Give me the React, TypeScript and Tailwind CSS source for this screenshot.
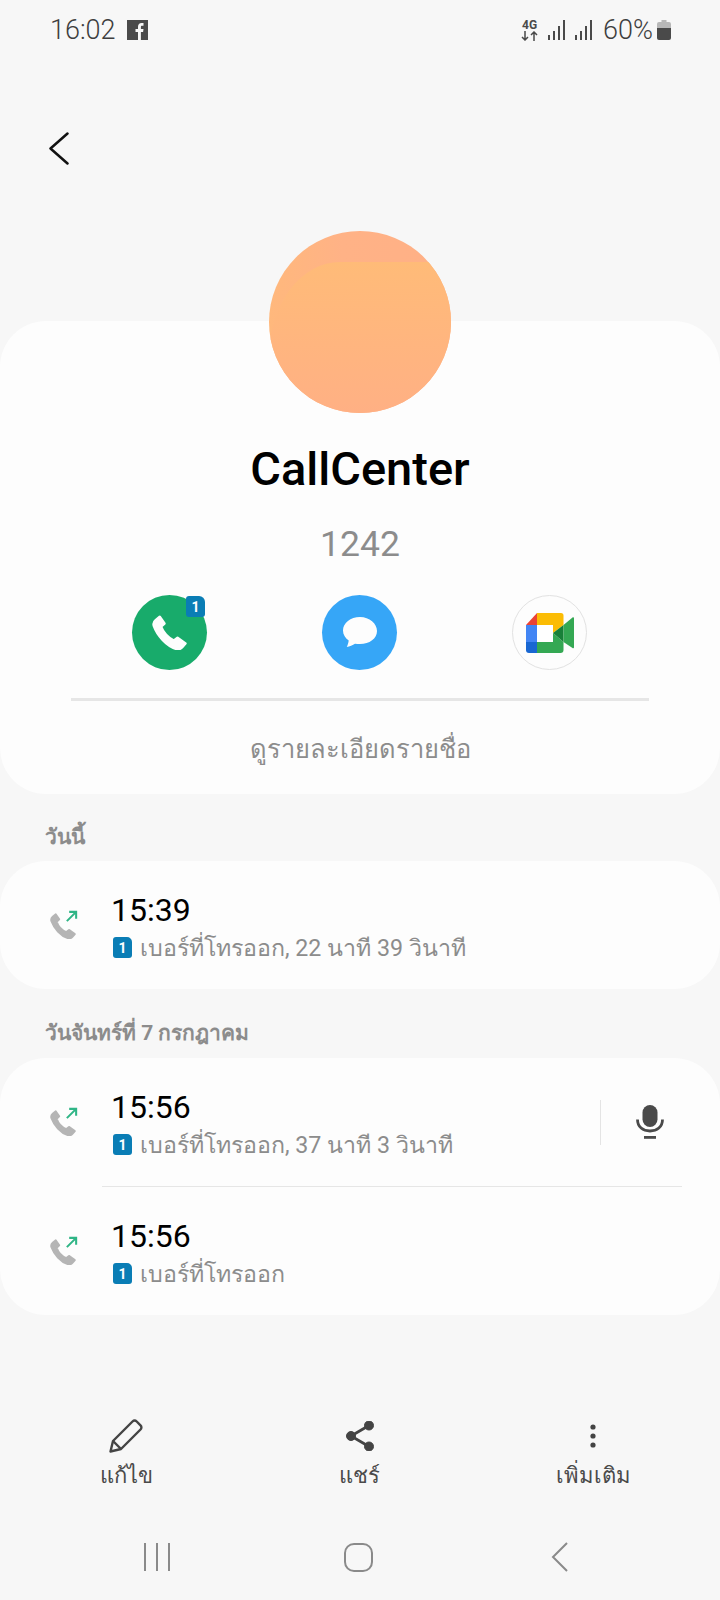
import React from "react";

const FONT = { roboto: "font-['Roboto','Noto_Sans',sans-serif]" };

function Handset({ className }: { className?: string }) {
  return (
    <svg viewBox="2.5 2.5 18.5 18.5" className={className} fill="currentColor" stroke="currentColor" strokeWidth="1.3" strokeLinejoin="round">
      <path d="M6.600 3.400 4.400 5.200C3.400 6 3.100 7.200 3.500 8.400c1.800 5 6.600 10.400 11.600 12 1.400.4 2.700 0 3.500-1l1.600-1.900-4.200-3-1.900 1.500c-2.900-1.200-5.800-4.400-6.800-7.300l1.800-1.700z" />
    </svg>
  );
}

function OutgoingIcon() {
  return (
    <div className="relative w-[29px] h-[29px] shrink-0">
      <Handset className="absolute left-[1px] top-[2px] w-[26px] h-[26px] text-[#b5b5b5]" />
      <svg viewBox="0 0 14 14" className="absolute left-[16px] top-[-1px] w-[13px] h-[13px]" fill="none" stroke="#2fb586" strokeWidth="2.200">
        <path d="M2 12 12 2M4.500 2H12v7.500" />
      </svg>
    </div>
  );
}

function SimBadge() {
  return (
    <span className="ml-[1px] flex items-center justify-center w-[19px] h-[21px] rounded-[3px] rounded-tr-[5px] bg-[#0a7db5] text-white text-[14px] font-bold leading-none shrink-0">
      1
    </span>
  );
}

function CallRow({ time, detail, mic }: { time: string; detail: string; mic?: boolean }) {
  return (
    <div className="flex items-center h-[128px] pl-[49px] pr-[56px]">
      <OutgoingIcon />
      <div className="ml-[34px] flex-1 pt-[4px]">
        <div className="-ml-[1px] text-[32px] leading-[36px] text-black">{time}</div>
        <div className="flex items-center gap-[8px] mt-[5px]">
          <SimBadge />
          <span className="text-[23.2px] leading-[30px] text-[#8c8c8c]">{detail}</span>
        </div>
      </div>
      {mic && (
        <>
          <div className="w-px h-[45px] bg-[#e4e4e4] mr-[35px]" />
          <svg viewBox="0 0 28 34" className="w-[28px] h-[34px] text-[#4a4a4a]" fill="currentColor">
            <rect x="6.500" y="0" width="15" height="22" rx="7.500" />
            <path d="M1.500 14.500c0 7.500 5.500 11.500 12.500 11.500s12.500-4 12.500-11.500" fill="none" stroke="currentColor" strokeWidth="2.800" />
            <rect x="8" y="31" width="12" height="2.800" />
          </svg>
        </>
      )}
    </div>
  );
}

function SignalBars() {
  return (
    <svg viewBox="0 0 18 20" className="w-[18px] h-[20px]" fill="#4a4a4a">
      <rect x="0" y="15" width="2" height="5" />
      <rect x="5" y="11" width="2" height="9" />
      <rect x="10" y="6" width="2" height="14" />
      <rect x="15" y="0" width="2" height="20" />
    </svg>
  );
}

function ActionButton({ label, children }: { label: string; children: React.ReactNode }) {
  return (
    <div className="flex flex-col items-center w-[120px]">
      <div className="flex items-center justify-center h-[36px]">{children}</div>
      <span className="mt-[6px] text-[22px] leading-[32px] font-light text-[#4a4a4a]">{label}</span>
    </div>
  );
}

export default function App() {
  return (
    <div className={`h-[1600px] w-[720px] overflow-hidden bg-[#f7f7f7] flex flex-col ${FONT.roboto}`}>
      {/* Status bar */}
      <div className="h-[60px] flex items-center justify-between pl-[50px] pr-[49px] shrink-0">
        <div className="flex items-center gap-[11px]">
          <span className="text-[27px] font-light text-[#3e3e3e]">16:02</span>
          <svg viewBox="0 0 21 20" className="w-[21px] h-[20px]">
            <rect width="21" height="20" fill="#4a4a4a" />
            <path d="M11 20v-8H8.500V9H11V6.800C11 4.400 12.400 3 14.600 3c.9 0 1.500.1 1.900.1v2.700h-1.300c-1 0-1.300.5-1.300 1.300V9h2.600l-.4 3h-2.200v8z" fill="#f7f7f7" />
          </svg>
        </div>
        <div className="flex items-center">
          <div className="flex flex-col items-center w-[17px] text-[#4a4a4a] mr-[10px]">
            <span className="text-[12px] leading-[11px] font-bold">4G</span>
            <svg viewBox="0 0 17 10" className="w-[17px] h-[10px]" fill="none" stroke="currentColor" strokeWidth="1.500">
              <path d="M4 0v9M1 6l3 3 3-3M13 10V1M10 4l3-3 3 3" />
            </svg>
          </div>
          <SignalBars />
          <div className="w-[9px]" />
          <SignalBars />
          <span className="ml-[10px] text-[27px] font-light text-[#3e3e3e]">60%</span>
          <svg viewBox="0 0 14 20" className="ml-[4px] w-[14px] h-[20px]">
            <path d="M4.500 0h5v2H12a2 2 0 0 1 2 2v4H0V4a2 2 0 0 1 2-2h2.500z" fill="#b8b8b8" />
            <path d="M0 8h14v10a2 2 0 0 1-2 2H2a2 2 0 0 1-2-2z" fill="#4a4a4a" />
          </svg>
        </div>
      </div>

      {/* Back */}
      <div className="h-[171px] shrink-0 pl-[49px] pt-[72px]">
        <svg viewBox="0 0 20 33" className="w-[20px] h-[33px]" fill="none" stroke="#111" strokeWidth="2.500" strokeLinecap="round" strokeLinejoin="round">
          <path d="M18.500 1.500 1.500 16.500l17 15" />
        </svg>
      </div>

      {/* Avatar */}
      <div className="relative z-10 mx-auto w-[182px] h-[182px] rounded-full overflow-hidden bg-gradient-to-r from-[#ffb87c] via-[#ffb286] via-40% to-[#ffb086] shrink-0 -mb-[92px]">
        <div className="absolute left-0 top-[31px] right-0 bottom-0 rounded-tl-[71px_95px] bg-gradient-to-b from-[#ffbb78] to-[#ffb084]" />
      </div>

      {/* Contact card */}
      <div className="h-[473px] shrink-0 rounded-[46px] bg-[#fdfdfd] pt-[116px] flex flex-col items-center">
        <div className="text-[47px] leading-[64px] font-medium text-black">CallCenter</div>
        <div className="mt-[18px] text-[35.5px] leading-[50px] text-[#8c8c8c]">1242</div>
        <div className="mt-[26px] flex w-full pl-[132px] gap-[115px]">
          <div className="relative w-[75px] h-[75px] rounded-full bg-[#18ab6b] flex items-center justify-center">
            <Handset className="w-[35px] h-[35px] text-[#fdfdfd]" />
            <span className="absolute right-[2px] top-[1px] flex items-center justify-center w-[19px] h-[21px] rounded-[3px] rounded-tr-[6px] bg-[#0a7db5] text-white text-[14px] font-bold leading-none">
              1
            </span>
          </div>
          <div className="w-[75px] h-[75px] rounded-full bg-[#36a6f7] flex items-center justify-center">
            <svg viewBox="0 0 36 34" className="w-[36px] h-[34px]" fill="#fdfdfd">
              <path d="M18 1C8.500 1 1 7 1 14.500c0 4 2.200 7.600 5.700 10-.2 2.400-1.200 5-1.900 6.400 2.700-.3 6-1.900 8.200-3.200 1.600.3 3.300.4 5 .4 9.500 0 17-5.700 17-13.100S27.500 1 18 1z" />
            </svg>
          </div>
          <div className="w-[75px] h-[75px] rounded-full border border-[#e2e2e2] flex items-center justify-center">
            <svg viewBox="0 0 48 40" className="w-[48px] h-[40px]">
              <path d="M11 0 0 12h11z" fill="#ea4335" />
              <path d="M11 0h24a2.500 2.500 0 0 1 2.500 2.500V12L27 20V12H11z" fill="#fbbc04" />
              <path d="M0 12h11v17H0z" fill="#4285f4" />
              <path d="M0 29h11v11H3a3 3 0 0 1-3-3z" fill="#1967d2" />
              <path d="M11 29h16v-9l10.500 9v8a3 3 0 0 1-3 3H11z" fill="#34a853" />
              <path d="M27 20 37.500 12v17z" fill="#188038" />
              <path d="M37.500 12 46.500 4.500c.7-.5 1.500 0 1.500.8v29c0 .8-.8 1.300-1.500.8L37.500 29z" fill="#34a853" />
              <path d="M11 12h16v17H11z" fill="#fff" />
            </svg>
          </div>
        </div>
        <div className="mt-[28px] w-[578px] h-[3px] bg-[#e6e6e6]" />
        <div className="mt-[16px] text-[25.5px] leading-[64px] text-[#8c8c8c]">ดูรายละเอียดรายชื่อ</div>
      </div>

      {/* Call log */}
      <div className="h-[67px] shrink-0 pl-[45px] pt-[24px] text-[21px] leading-[38px] font-bold text-[#8c8c8c]">วันนี้</div>
      <div className="shrink-0 rounded-[46px] bg-[#fdfdfd]">
        <CallRow time="15:39" detail="เบอร์ที่โทรออก, 22 นาที 39 วินาที" />
      </div>
      <div className="h-[69px] shrink-0 pl-[45px] pt-[25px] text-[21px] leading-[38px] font-bold text-[#8c8c8c]">วันจันทร์ที่ 7 กรกฎาคม</div>
      <div className="shrink-0 rounded-[46px] bg-[#fdfdfd]">
        <CallRow time="15:56" detail="เบอร์ที่โทรออก, 37 นาที 3 วินาที" mic />
        <div className="ml-[102px] mr-[38px] h-px bg-[#e6e6e6]" />
        <CallRow time="15:56" detail="เบอร์ที่โทรออก" />
      </div>

      {/* Bottom actions */}
      <div className="mt-[103px] flex justify-between pl-[66px] pr-[67px] shrink-0">
        <ActionButton label="แก้ไข">
          <svg viewBox="0 0 34 34" className="w-[34px] h-[34px]" fill="none" stroke="#444" strokeWidth="2.400" strokeLinejoin="round">
            <path d="M1.500 32.500 4 22 23.500 2.500c1.200-1.200 3-1.200 4.200 0l3.800 3.800c1.200 1.200 1.200 3 0 4.200L12 30z" />
            <path d="M4 22l8 8" />
          </svg>
        </ActionButton>
        <ActionButton label="แชร์">
          <svg viewBox="0 0 28 30" className="w-[28px] h-[30px]" fill="#444" stroke="#444">
            <circle cx="5" cy="15" r="4.500" />
            <circle cx="23" cy="4.500" r="4.500" />
            <circle cx="23" cy="25.500" r="4.500" />
            <path d="M5 15 23 4.500M5 15l18 10.500" fill="none" strokeWidth="2.800" />
          </svg>
        </ActionButton>
        <ActionButton label="เพิ่มเติม">
          <svg viewBox="0 0 6 24" className="w-[6px] h-[24px]" fill="#444">
            <circle cx="3" cy="3" r="2.600" />
            <circle cx="3" cy="12" r="2.600" />
            <circle cx="3" cy="21" r="2.600" />
          </svg>
        </ActionButton>
      </div>

      {/* Nav bar */}
      <div className="mt-[50px] flex items-center shrink-0 h-[30px] pl-[144px]">
        <div className="flex gap-[10px] w-[200px]">
          <div className="w-[2px] h-[28px] bg-[#8a8a8a]" />
          <div className="w-[2px] h-[28px] bg-[#8a8a8a]" />
          <div className="w-[2px] h-[28px] bg-[#8a8a8a]" />
        </div>
        <div className="w-[29px] h-[29px] rounded-[10px] border-[2.5px] border-[#8a8a8a]" />
        <svg viewBox="0 0 17 30" className="ml-[178px] w-[17px] h-[30px]" fill="none" stroke="#8a8a8a" strokeWidth="2">
          <path d="M16 1 2 15l14 14" />
        </svg>
      </div>
    </div>
  );
}
